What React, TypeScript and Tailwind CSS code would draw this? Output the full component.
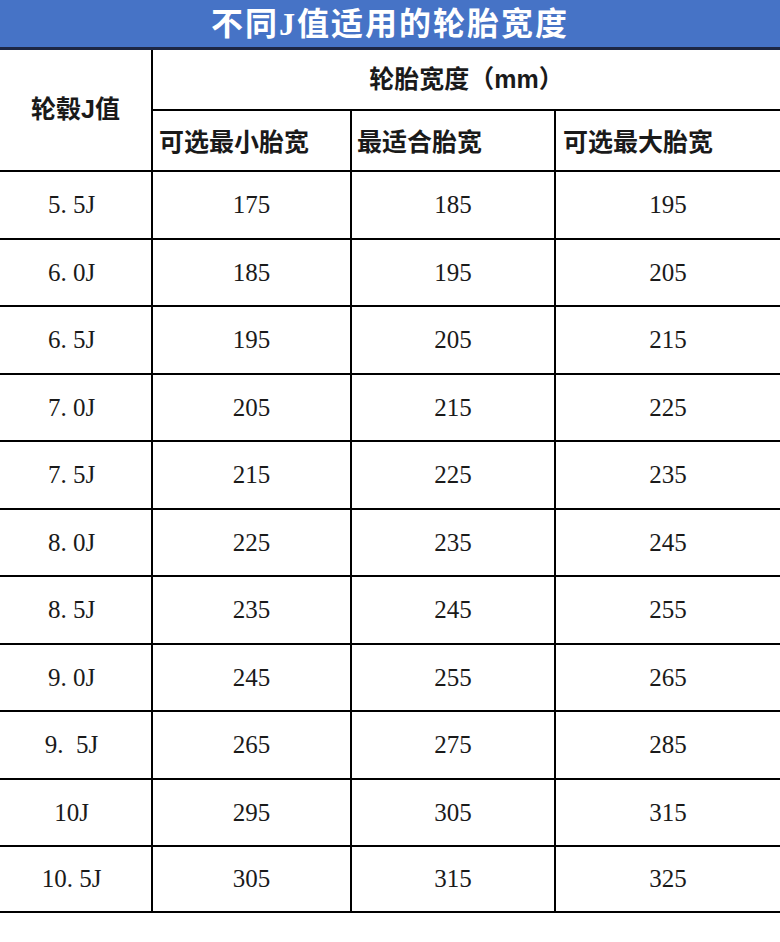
import React from 'react';

const rows: [string, string, string, string][] = [
  ['5. 5J', '175', '185', '195'],
  ['6. 0J', '185', '195', '205'],
  ['6. 5J', '195', '205', '215'],
  ['7. 0J', '205', '215', '225'],
  ['7. 5J', '215', '225', '235'],
  ['8. 0J', '225', '235', '245'],
  ['8. 5J', '235', '245', '255'],
  ['9. 0J', '245', '255', '265'],
  ['9.  5J', '265', '275', '285'],
  ['10J', '295', '305', '315'],
  ['10. 5J', '305', '315', '325'],
];

// row heights so the lines land on the same pixels as the picture
const heights = ['h-[68px]', 'h-[67px]', 'h-[68px]', 'h-[67px]', 'h-[68px]', 'h-[67px]', 'h-[68px]', 'h-[67px]', 'h-[68px]', 'h-[67px]', 'h-[66px]'];

const cjk = "font-['Liberation_Sans','Noto_Sans_CJK_SC',sans-serif]";
const num = "font-['Liberation_Serif','Noto_Sans_CJK_SC',serif]";

export default function App() {
  return (
    <div className="w-[780px] h-[942px] bg-white overflow-hidden">
      <div className="h-[50px] bg-[#4673c6] border-b-[3px] border-[#1d2744] flex items-center justify-center">
        <h1 className={`text-[32px] leading-none font-bold text-white tracking-[2px] ${num}`}>
          不同J值适用的轮胎宽度
        </h1>
      </div>

      <div className="grid grid-cols-[153px_199px_204px_224px] text-[#1a1a1a]">
        <div className={`row-span-2 border-r-2 border-b-2 border-black flex items-center justify-center text-[25px] font-bold ${cjk}`}>
          轮毂J值
        </div>
        <div className={`col-span-3 h-[61px] border-b-2 border-black flex items-center justify-center text-[25px] font-bold ${cjk}`}>
          轮胎宽度（mm）
        </div>
        <div className={`h-[61px] border-r-2 border-b-2 border-black flex items-center pl-[6px] pt-[4px] text-[25px] font-bold ${cjk}`}>
          可选最小胎宽
        </div>
        <div className={`h-[61px] border-r-2 border-b-2 border-black flex items-center pl-[5px] pt-[4px] text-[25px] font-bold ${cjk}`}>
          最适合胎宽
        </div>
        <div className={`h-[61px] border-b-2 border-black flex items-center pl-[7px] pt-[4px] text-[25px] font-bold ${cjk}`}>
          可选最大胎宽
        </div>

        {rows.map((r, i) => (
          <React.Fragment key={i}>
            <div className={`${heights[i]} border-r-2 border-b-2 border-black flex items-center justify-center pr-[8px] text-[25px] whitespace-pre ${num}`}>
              {r[0]}
            </div>
            <div className={`${heights[i]} border-r-2 border-b-2 border-black flex items-center justify-center text-[25px] ${num}`}>
              {r[1]}
            </div>
            <div className={`${heights[i]} border-r-2 border-b-2 border-black flex items-center justify-center text-[25px] ${num}`}>
              {r[2]}
            </div>
            <div className={`${heights[i]} border-b-2 border-black flex items-center justify-center text-[25px] ${num}`}>
              {r[3]}
            </div>
          </React.Fragment>
        ))}
      </div>
    </div>
  );
}
